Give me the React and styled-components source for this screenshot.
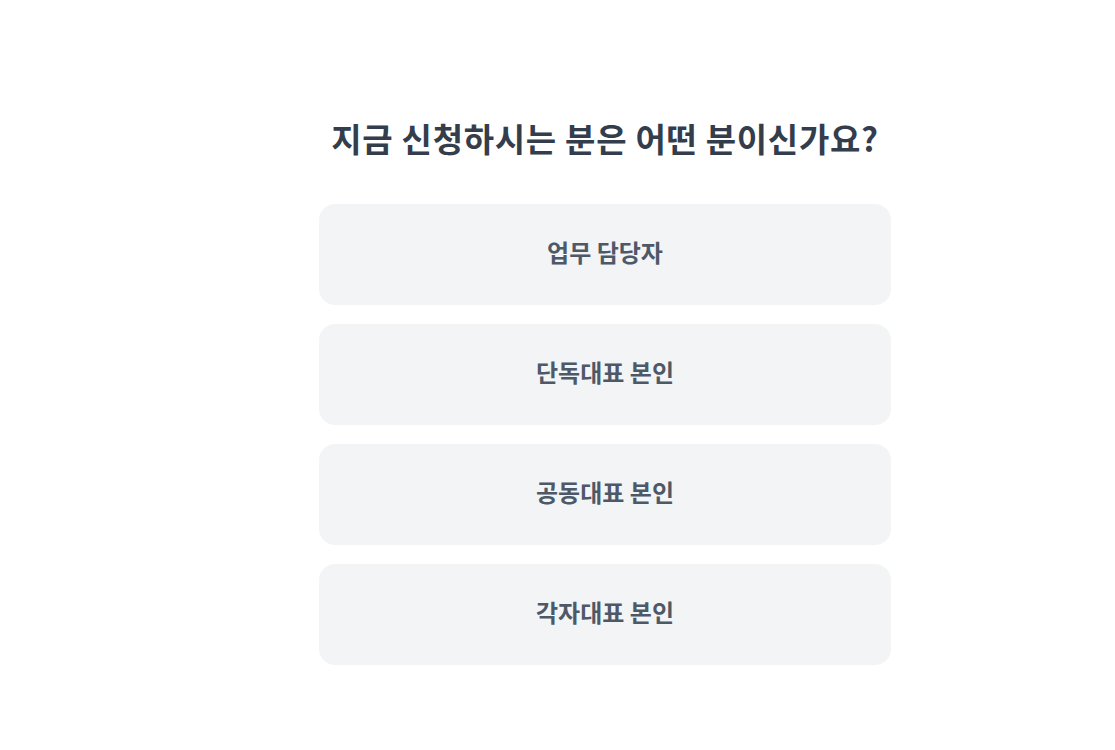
import React from "react";
import styled, { createGlobalStyle } from "styled-components";

const GlobalStyle = createGlobalStyle`
  body {
    margin: 0;
    background: #fff;
    font-family: "Noto Sans CJK KR", "Noto Sans", sans-serif;
  }
`;

const Page = styled.main`
  padding: 117px 0 0 319px;
`;

const Content = styled.section`
  width: 572px;
  display: flex;
  flex-direction: column;
`;

const Title = styled.h1`
  margin: 0 0 45px;
  font-size: 33px;
  line-height: 42px;
  font-weight: 700;
  color: #333d4b;
  text-align: center;
  letter-spacing: 0.7px;
`;

const OptionList = styled.ul`
  list-style: none;
  margin: 0;
  padding: 0;
  display: flex;
  flex-direction: column;
  gap: 19px;
`;

const OptionButton = styled.button`
  width: 100%;
  height: 101px;
  border: none;
  border-radius: 16px;
  background: #f2f4f6;
  color: #4e5968;
  font-family: inherit;
  font-size: 24px;
  font-weight: 700;
  cursor: pointer;
  display: flex;
  align-items: center;
  justify-content: center;
  padding-bottom: 7px;
`;

const options = ["업무 담당자", "단독대표 본인", "공동대표 본인", "각자대표 본인"];

export default function App() {
  return (
    <>
      <GlobalStyle />
      <Page>
        <Content>
          <Title>지금 신청하시는 분은 어떤 분이신가요?</Title>
          <OptionList>
            {options.map((label) => (
              <li key={label}>
                <OptionButton>{label}</OptionButton>
              </li>
            ))}
          </OptionList>
        </Content>
      </Page>
    </>
  );
}
